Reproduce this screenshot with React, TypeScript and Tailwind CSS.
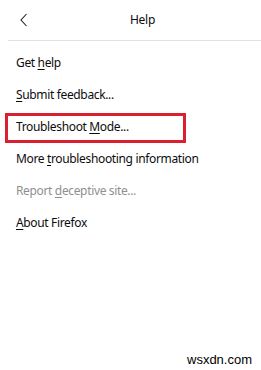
import React from "react";

function U({ children }: { children: React.ReactNode }) {
  return <span className="underline underline-offset-2 decoration-1">{children}</span>;
}

function Row({ children, gray }: { children: React.ReactNode; gray?: boolean }) {
  return (
    <div className={"h-8 flex items-center pl-[16px]" + (gray ? " text-[#8f8f91]" : "")}>
      <span>{children}</span>
    </div>
  );
}

export default function App() {
  const font = { fontFamily: '"Noto Sans", "Open Sans", sans-serif' };
  return (
    <div className="relative w-[261px] h-[370px] bg-white text-[#0c0c0d]" style={font}>
      <div className="flex items-center h-[40px] pl-[20px] pr-2">
        <svg width="8" height="14" viewBox="0 0 8 14" className="shrink-0">
          <path d="M6.5 1 L1 7 L6.5 13" fill="none" stroke="#222" strokeWidth="1.1" />
        </svg>
        <div className="flex-1 text-center text-[12px] tracking-[-0.3px] pl-[4px]">Help</div>
      </div>
      <div className="ml-[8px] h-px bg-[#e1e1e2]" />
      <div className="pt-[6px] flex flex-col text-[12px] tracking-[-0.35px]">
        <Row>Get <U>h</U>elp</Row>
        <Row><U>S</U>ubmit feedback...</Row>
        <Row>Troubleshoot <U>M</U>ode...</Row>
        <Row>More <U>t</U>roubleshooting information</Row>
        <Row gray>Report <U>d</U>eceptive site...</Row>
        <Row><U>A</U>bout Firefox</Row>
      </div>
      <div className="absolute left-[5px] top-[113px] w-[181px] h-[30px] border-[3px] border-[#dc1f2e]" />
      <div
        className="absolute left-[187px] top-[352px] text-[13px] leading-[16px] text-black"
        style={{ fontFamily: '"Liberation Sans", Arial, sans-serif' }}
      >
        wsxdn.com
      </div>
    </div>
  );
}
